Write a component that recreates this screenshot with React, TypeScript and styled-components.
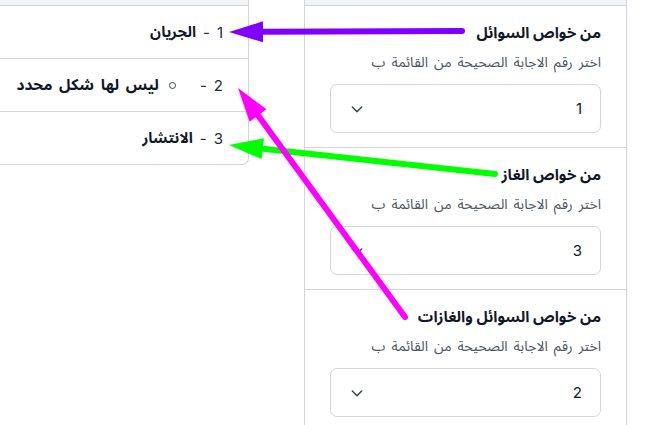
import React from "react";
import styled, { createGlobalStyle } from "styled-components";

const GlobalStyle = createGlobalStyle`
  html, body {
    margin: 0;
    padding: 0;
    background: #ffffff;
    font-family: Inter, "Noto Sans Arabic", "DejaVu Sans", sans-serif;
    color: #111827;
  }
`;

const Page = styled.div`
  position: relative;
  width: 655px;
  height: 425px;
  overflow: hidden;
  display: flex;
  align-items: flex-start;
  direction: ltr;
`;

const HeadStrip = styled.div`
  height: 5px;
  background: #f3f4f6;
  border-bottom: 1px solid #d1d5db;
`;

const ListCard = styled.div`
  width: 248px;
  border-right: 1px solid #d1d5db;
  border-bottom: 1px solid #d1d5db;
  border-bottom-right-radius: 7px;
  overflow: hidden;
`;

const ListRow = styled.div<{ $last?: boolean }>`
  height: 52px;
  display: flex;
  align-items: center;
  direction: rtl;
  padding-right: 25px;
  border-bottom: ${(p) => (p.$last ? "none" : "1px solid #d1d5db")};
  font-size: 15px;
  white-space: nowrap;
`;

const Num = styled.span`
  color: #1f2937;
  font-weight: 400;
`;

const Dash = styled.span`
  color: #1f2937;
  margin: 0 7px;
`;

const Bullet = styled.span`
  display: inline-block;
  width: 5px;
  height: 5px;
  border: 1px solid #374151;
  border-radius: 50%;
  margin: 0 17px 0 10px;
`;

const Term = styled.span<{ $wide?: boolean }>`
  font-weight: 700;
  color: #111827;
  word-spacing: ${(p) => (p.$wide ? "3px" : "0")};
  font-size: ${(p) => (p.$wide ? "15.5px" : "15px")};
`;

const Panel = styled.div`
  margin-left: 55px;
  width: 321px;
  border-left: 1px solid #d1d5db;
  border-right: 1px solid #d1d5db;
`;

const Section = styled.div<{ $last?: boolean }>`
  direction: rtl;
  padding: 16px 25px 14px 25px;
  border-bottom: ${(p) => (p.$last ? "none" : "1px solid #d1d5db")};
`;

const Title = styled.div`
  font-size: 15.2px;
  line-height: 22px;
  font-weight: 700;
  color: #111827;
`;

const Hint = styled.div`
  margin-top: 8px;
  font-size: 14px;
  word-spacing: 2px;
  line-height: 20px;
  color: #4b5563;
`;

const Select = styled.div`
  margin-top: 12px;
  height: 49px;
  box-sizing: border-box;
  border: 1px solid #d1d5db;
  border-radius: 7px;
  display: flex;
  align-items: center;
  justify-content: space-between;
  padding: 0 18px 0 18px;
  font-size: 15px;
  color: #111827;
`;

const Overlay = styled.svg`
  position: absolute;
  left: 0;
  top: 0;
  pointer-events: none;
`;

const Chevron = () => (
  <svg width="16" height="16" viewBox="0 0 24 24" fill="none" stroke="#374151" strokeWidth="2.2" strokeLinecap="round" strokeLinejoin="round">
    <path d="M5 9l7 7 7-7" />
  </svg>
);

type ArrowProps = { x1: number; y1: number; x2: number; y2: number; color: string };

const Arrow = ({ x1, y1, x2, y2, color }: ArrowProps) => {
  const dx = x2 - x1;
  const dy = y2 - y1;
  const len = Math.hypot(dx, dy);
  const ux = dx / len;
  const uy = dy / len;
  const hl = 34;
  const hw = 10.5;
  const bx = x2 - ux * hl;
  const by = y2 - uy * hl;
  const pts = `${x2},${y2} ${bx - uy * hw},${by + ux * hw} ${bx + uy * hw},${by - ux * hw}`;
  return (
    <g>
      <line x1={x1} y1={y1} x2={bx + ux * 2} y2={by + uy * 2} stroke={color} strokeWidth="6" strokeLinecap="round" />
      <polygon points={pts} fill={color} />
    </g>
  );
};

const items = [
  { n: "1", t: "الجريان" },
  { n: "2", t: "ليس لها شكل محدد", bullet: true },
  { n: "3", t: "الانتشار" },
];

const questions = [
  { title: "من خواص السوائل", value: "1" },
  { title: "من خواص الغاز", value: "3" },
  { title: "من خواص السوائل والغازات", value: "2" },
];

export default function App() {
  return (
    <>
      <GlobalStyle />
      <Page>
        <ListCard>
          <HeadStrip />
          {items.map((it, i) => (
            <ListRow key={it.n} $last={i === items.length - 1}>
              <Num>{it.n}</Num>
              <Dash>-</Dash>
              {it.bullet && <Bullet />}
              <Term $wide={it.bullet}>{it.t}</Term>
            </ListRow>
          ))}
        </ListCard>
        <Panel>
          <HeadStrip />
          {questions.map((q, i) => (
            <Section key={q.title} $last={i === questions.length - 1}>
              <Title>{q.title}</Title>
              <Hint>اختر رقم الاجابة الصحيحة من القائمة ب</Hint>
              <Select>
                <span>{q.value}</span>
                <Chevron />
              </Select>
            </Section>
          ))}
        </Panel>
        <Overlay width="655" height="425" viewBox="0 0 655 425">
          <Arrow x1={462} y1={31} x2={229} y2={32} color="#8000ff" />
          <Arrow x1={495} y1={174} x2={229} y2={145} color="#00ff00" />
          <Arrow x1={405} y1={317} x2={238} y2={88} color="#ff00ff" />
        </Overlay>
      </Page>
    </>
  );
}
